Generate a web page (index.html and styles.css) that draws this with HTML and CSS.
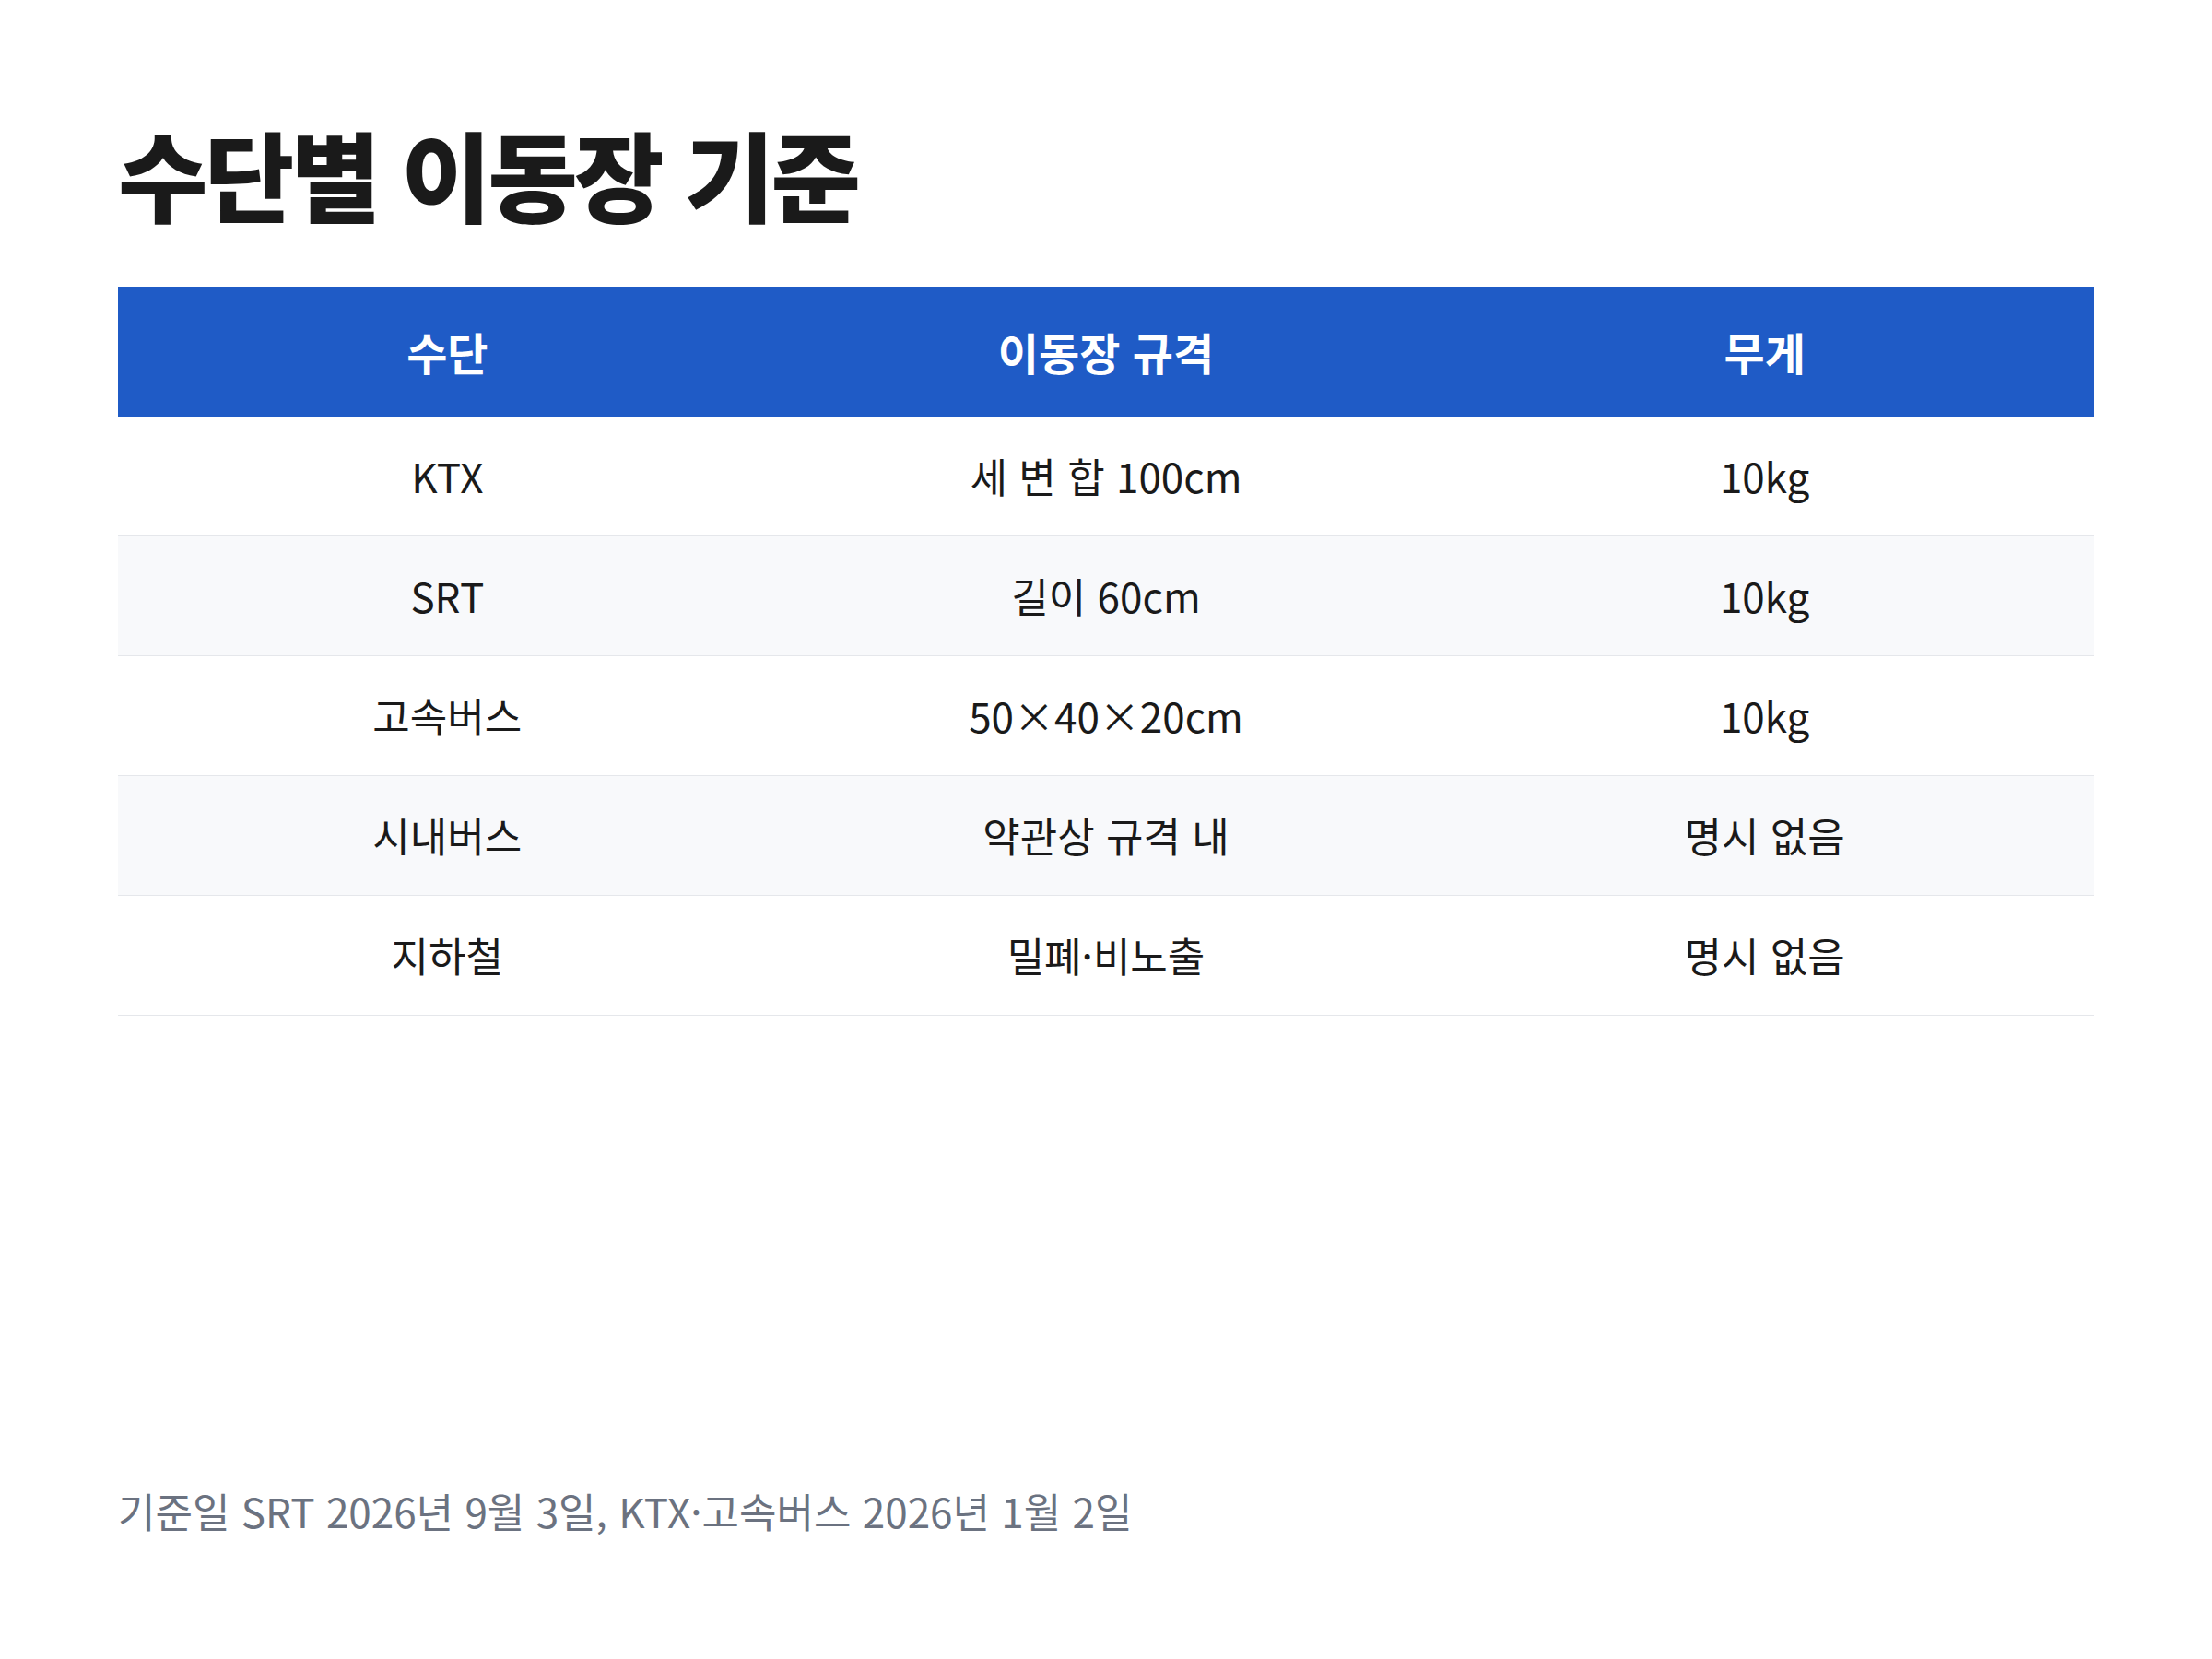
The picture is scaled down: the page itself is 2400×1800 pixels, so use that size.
FILE: index.html
```html
<!DOCTYPE html>
<html lang="ko">
<head>
<meta charset="utf-8">
<title>수단별 이동장 기준</title>
<link rel="stylesheet" href="styles.css">
</head>
<body>
<main class="page">
  <h1 class="title">수단별 이동장 기준</h1>
  <table class="spec">
    <thead>
      <tr><th>수단</th><th>이동장 규격</th><th>무게</th></tr>
    </thead>
    <tbody>
      <tr><td>KTX</td><td>세 변 합 100cm</td><td>10kg</td></tr>
      <tr><td>SRT</td><td>길이 60cm</td><td>10kg</td></tr>
      <tr><td>고속버스</td><td>50×40×20cm</td><td>10kg</td></tr>
      <tr><td>시내버스</td><td>약관상 규격 내</td><td>명시 없음</td></tr>
      <tr><td>지하철</td><td>밀폐·비노출</td><td>명시 없음</td></tr>
    </tbody>
  </table>
  <p class="note">기준일 SRT 2026년 9월 3일, KTX·고속버스 2026년 1월 2일</p>
</main>
</body>
</html>
```
FILE: styles.css
```css
html, body {
  margin: 0;
  padding: 0;
  background: #ffffff;
}
body {
  font-family: "Noto Sans CJK KR", "Noto Sans", sans-serif;
  color: #1a1a1a;
}
.page {
  padding: 124px 128px 0 128px;
}
.title {
  margin: 0 0 60px 0;
  font-size: 106px;
  line-height: 1.2;
  font-weight: 900;
  letter-spacing: -0.035em;
  color: #1a1a1a;
}
.spec {
  width: 100%;
  border-collapse: collapse;
  table-layout: fixed;
}
.spec th {
  background: #1f5bc6;
  color: #ffffff;
  font-size: 48px;
  font-weight: 700;
  line-height: 69px;
  padding: 36px 0;
  text-align: center;
}
.spec td {
  font-size: 44px;
  font-weight: 400;
  line-height: 65px;
  padding: 32px 0;
  text-align: center;
  border-bottom: 1px solid #e5e7eb;
}
.spec tbody tr:nth-child(even) td {
  background: #f8f9fb;
}
.note {
  margin: 504px 0 0 0;
  font-size: 44px;
  line-height: 1.5;
  color: #6b7280;
}
```
